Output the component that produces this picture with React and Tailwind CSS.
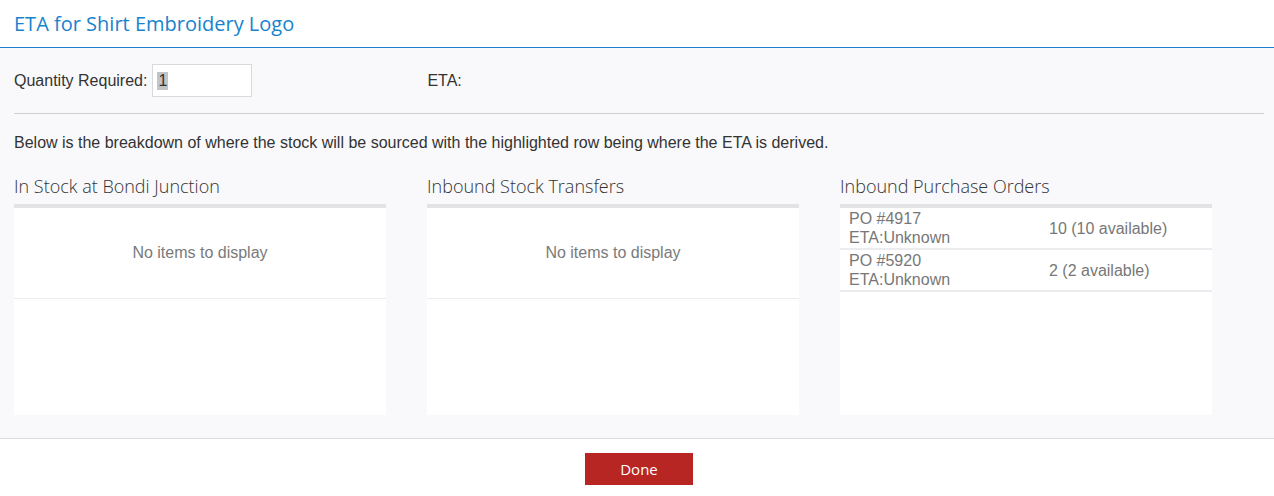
import React from 'react';

const segoe = { fontFamily: '"Segoe UI", "Open Sans", "Noto Sans", sans-serif' };

const purchaseOrders = [
  { po: 'PO #4917', eta: 'ETA:Unknown', qty: '10 (10 available)' },
  { po: 'PO #5920', eta: 'ETA:Unknown', qty: '2 (2 available)' },
];

const EmptyPanel = () => (
  <div className="h-[211px] bg-white border-t-4 border-t-[#e3e3e6]">
    <div className="h-[91px] flex items-center justify-center border-b border-b-[#ececef] text-[16px] text-[#7a7a7a]">
      No items to display
    </div>
  </div>
);

const Column = ({ title, children }) => (
  <div className="w-[372px]">
    <h3 className="text-[18px] font-light text-[#333] leading-[24px] mb-[6px]" style={segoe}>
      {title}
    </h3>
    {children}
  </div>
);

const App = () => {
  return (
    <div className="w-[1274px] h-[496px] bg-white text-[#333]" style={{ fontFamily: '"Liberation Sans", Arial, sans-serif' }}>
      {/* Header */}
      <div className="h-[47px] px-[14px] flex items-center">
        <h1 className="text-[20px] text-[#1783cc] leading-none" style={segoe}>
          ETA for Shirt Embroidery Logo
        </h1>
      </div>
      <div className="h-px bg-[#1a7fcc]" />

      {/* Body */}
      <div className="h-[391px] bg-[#f9f9fb] border-b border-b-[#dcdcdc] pl-[14px] pr-[10px] pt-[16px]">
        <div className="flex items-center h-[33px] text-[16px]">
          <span className="mr-[5px]">Quantity Required:</span>
          <div className="w-[100px] h-[33px] bg-white border border-[#d9d9d9] flex items-center pl-[4px]">
            <span className="bg-[#c4c4c4] text-[16px] leading-[18px] px-[1px]">1</span>
          </div>
          <span className="ml-[175px]">ETA:</span>
        </div>

        <div className="mt-[16px] border-t border-t-[#cfcfd2]" />

        <p className="mt-[20px] text-[16px] leading-[18px]">
          Below is the breakdown of where the stock will be sourced with the highlighted row being where the ETA is derived.
        </p>

        <div className="mt-[22px] flex gap-x-[41px]">
          <Column title="In Stock at Bondi Junction">
            <EmptyPanel />
          </Column>
          <Column title="Inbound Stock Transfers">
            <EmptyPanel />
          </Column>
          <Column title="Inbound Purchase Orders">
            <div className="h-[211px] bg-white border-t-4 border-t-[#e3e3e6]">
              {purchaseOrders.map((row) => (
                <div key={row.po} className="h-[42px] flex items-center border-b-2 border-b-[#ececef] text-[16px] text-[#777] leading-[19px]">
                  <div className="w-[209px] pl-[9px]">
                    <div>{row.po}</div>
                    <div>{row.eta}</div>
                  </div>
                  <div>{row.qty}</div>
                </div>
              ))}
            </div>
          </Column>
        </div>
      </div>

      {/* Footer */}
      <div className="flex justify-center pt-[14px] pl-[4px]">
        <button className="w-[108px] h-[32px] bg-[#b72622] text-white text-[15px]" style={segoe}>
          Done
        </button>
      </div>
    </div>
  );
};

export default App;
